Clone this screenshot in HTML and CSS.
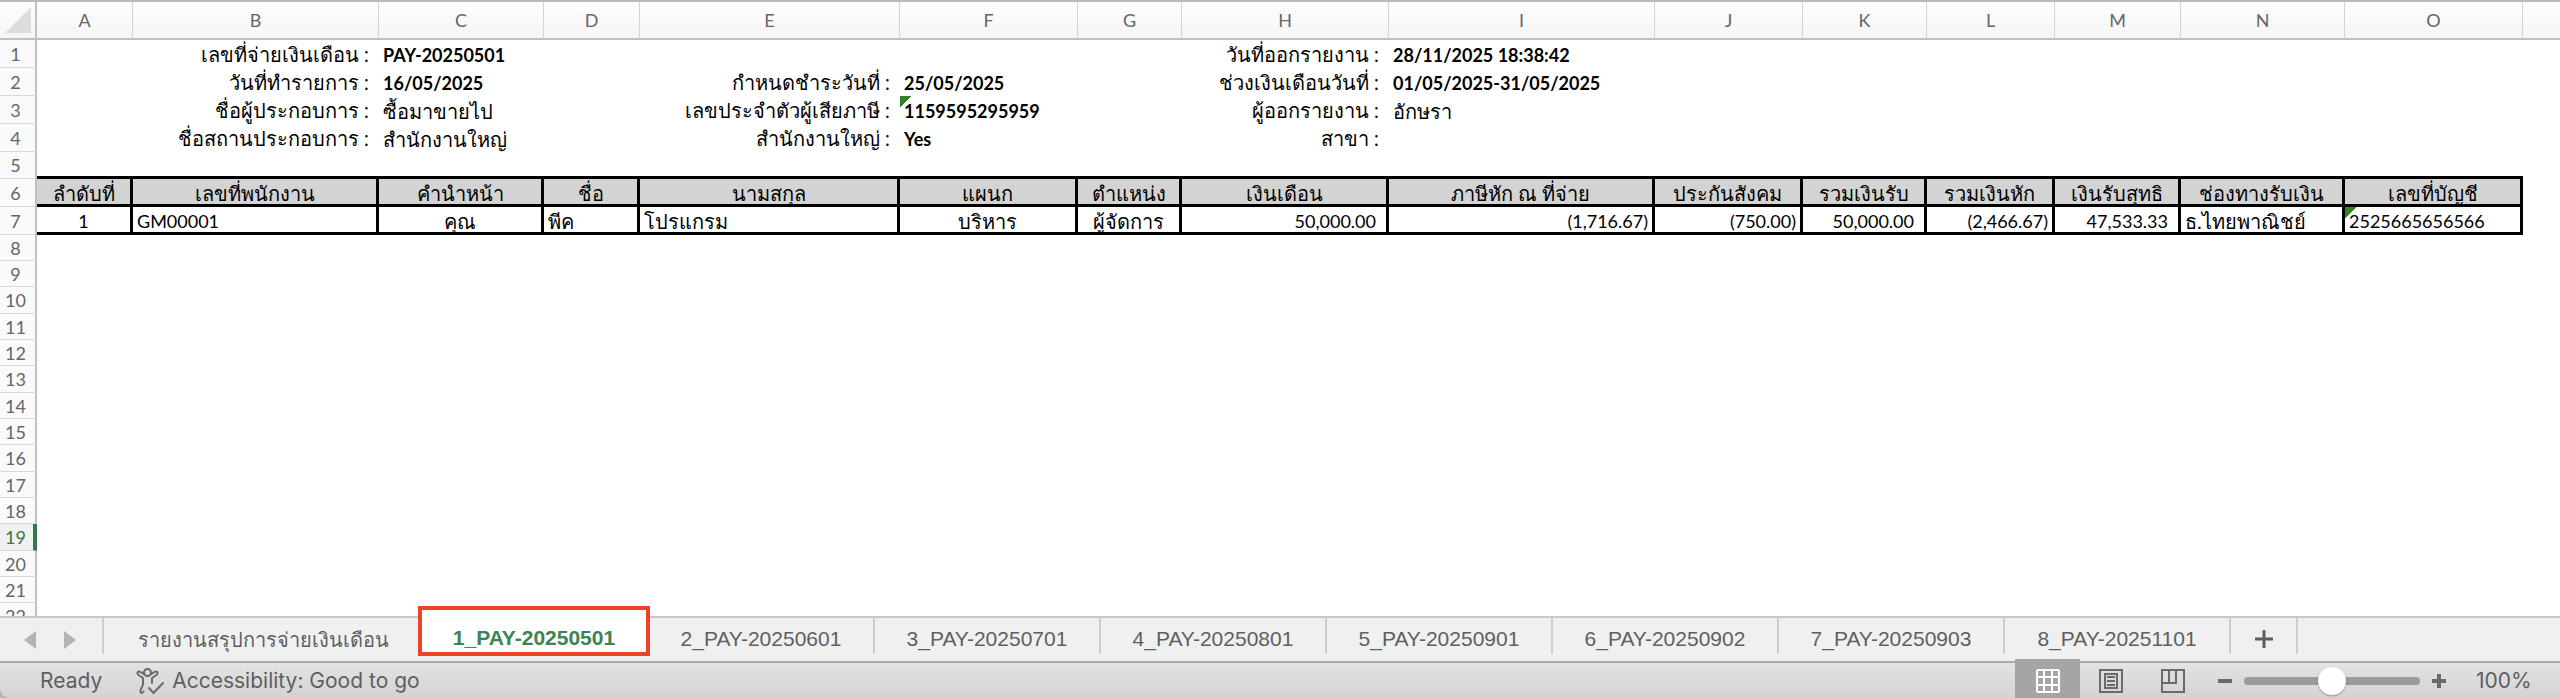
FILE: index.html
```html
<!DOCTYPE html>
<html lang="th">

<head>
    <meta charset="utf-8">
    <meta name="viewport" content="width=device-width, initial-scale=1.0">
    <title>1_PAY-20250501</title>
    <link rel="stylesheet" href="styles.css">
</head>

<body>
    <main class="sheet">
        <table class="grid">
            <colgroup>
                <col class="w-row">
                <col class="w-a">
                <col class="w-b">
                <col class="w-c">
                <col class="w-d">
                <col class="w-e">
                <col class="w-f">
                <col class="w-g">
                <col class="w-h">
                <col class="w-i">
                <col class="w-j">
                <col class="w-k">
                <col class="w-l">
                <col class="w-m">
                <col class="w-n">
                <col class="w-o">
                <col>
            </colgroup>
            <thead>
                <tr>
                    <td class="corner"><svg width="28" height="28" viewBox="0 0 28 28"><path d="M26 1v26H0z" fill="#dcdcdc"/></svg></td>
                    <th>A</th><th>B</th><th>C</th><th>D</th><th>E</th><th>F</th><th>G</th><th>H</th>
                    <th>I</th><th>J</th><th>K</th><th>L</th><th>M</th><th>N</th><th>O</th><th></th>
                </tr>
            </thead>
            <tbody class="report">
                <tr>
                    <th>1</th>
                    <td></td>
                    <td class="label">เลขที่จ่ายเงินเดือน :</td>
                    <td class="value">PAY-20250501</td>
                    <td></td><td></td><td></td><td></td>
                    <td class="label">วันที่ออกรายงาน :</td>
                    <td class="value">28/11/2025 18:38:42</td>
                    <td colspan="7"></td>
                </tr>
                <tr>
                    <th>2</th>
                    <td></td>
                    <td class="label">วันที่ทำรายการ :</td>
                    <td class="value">16/05/2025</td>
                    <td></td>
                    <td class="label">กำหนดชำระวันที่ :</td>
                    <td class="value">25/05/2025</td>
                    <td></td>
                    <td class="label">ช่วงเงินเดือนวันที่ :</td>
                    <td class="value">01/05/2025-31/05/2025</td>
                    <td colspan="7"></td>
                </tr>
                <tr>
                    <th>3</th>
                    <td></td>
                    <td class="label">ชื่อผู้ประกอบการ :</td>
                    <td class="thai">ซื้อมาขายไป</td>
                    <td></td>
                    <td class="label">เลขประจำตัวผู้เสียภาษี :</td>
                    <td class="value flagged">1159595295959</td>
                    <td></td>
                    <td class="label">ผู้ออกรายงาน :</td>
                    <td class="thai">อักษรา</td>
                    <td colspan="7"></td>
                </tr>
                <tr>
                    <th>4</th>
                    <td></td>
                    <td class="label">ชื่อสถานประกอบการ :</td>
                    <td class="thai">สำนักงานใหญ่</td>
                    <td></td>
                    <td class="label">สำนักงานใหญ่ :</td>
                    <td class="value">Yes</td>
                    <td></td>
                    <td class="label">สาขา :</td>
                    <td></td>
                    <td colspan="7"></td>
                </tr>
                <tr class="spacer">
                    <th>5</th>
                    <td colspan="15"></td>
                    <td class="outside"></td>
                </tr>
                <tr class="fields">
                    <th>6</th>
                    <td>ลำดับที่</td>
                    <td>เลขที่พนักงาน</td>
                    <td>คำนำหน้า</td>
                    <td>ชื่อ</td>
                    <td>นามสกุล</td>
                    <td>แผนก</td>
                    <td>ตำแหน่ง</td>
                    <td>เงินเดือน</td>
                    <td>ภาษีหัก ณ ที่จ่าย</td>
                    <td>ประกันสังคม</td>
                    <td>รวมเงินรับ</td>
                    <td>รวมเงินหัก</td>
                    <td>เงินรับสุทธิ</td>
                    <td>ช่องทางรับเงิน</td>
                    <td>เลขที่บัญชี</td>
                    <td class="outside"></td>
                </tr>
                <tr class="record">
                    <th>7</th>
                    <td class="center">1</td>
                    <td>GM00001</td>
                    <td class="center thai">คุณ</td>
                    <td class="thai">พีค</td>
                    <td class="thai">โปรแกรม</td>
                    <td class="center thai">บริหาร</td>
                    <td class="center thai">ผู้จัดการ</td>
                    <td class="amount">50,000.00</td>
                    <td class="amount negative">(1,716.67)</td>
                    <td class="amount negative">(750.00)</td>
                    <td class="amount">50,000.00</td>
                    <td class="amount negative">(2,466.67)</td>
                    <td class="amount">47,533.33</td>
                    <td class="thai">ธ.ไทยพาณิชย์</td>
                    <td class="flagged">2525665656566</td>
                    <td class="outside"></td>
                </tr>
            </tbody>
            <tbody class="blank">
                <tr><th>8</th><td colspan="16"></td></tr>
                <tr><th>9</th><td colspan="16"></td></tr>
                <tr><th>10</th><td colspan="16"></td></tr>
                <tr><th>11</th><td colspan="16"></td></tr>
                <tr><th>12</th><td colspan="16"></td></tr>
                <tr><th>13</th><td colspan="16"></td></tr>
                <tr><th>14</th><td colspan="16"></td></tr>
                <tr><th>15</th><td colspan="16"></td></tr>
                <tr><th>16</th><td colspan="16"></td></tr>
                <tr><th>17</th><td colspan="16"></td></tr>
                <tr><th>18</th><td colspan="16"></td></tr>
                <tr class="current"><th>19</th><td colspan="16"></td></tr>
                <tr><th>20</th><td colspan="16"></td></tr>
                <tr><th>21</th><td colspan="16"></td></tr>
                <tr><th>22</th><td colspan="16"></td></tr>
            </tbody>
        </table>
    </main>

    <nav class="tabs">
        <div class="tab-nav">
            <button type="button" aria-label="Previous sheet"><svg width="12" height="18" viewBox="0 0 12 18"><path d="M12 0v18L0 9z" fill="#b4b4b4"/></svg></button>
            <button type="button" aria-label="Next sheet"><svg width="12" height="18" viewBox="0 0 12 18"><path d="M0 0v18l12-9z" fill="#b4b4b4"/></svg></button>
        </div>
        <button type="button" class="tab summary">รายงานสรุปการจ่ายเงินเดือน</button>
        <button type="button" class="tab active">1_PAY-20250501</button>
        <button type="button" class="tab">2_PAY-20250601</button>
        <button type="button" class="tab">3_PAY-20250701</button>
        <button type="button" class="tab">4_PAY-20250801</button>
        <button type="button" class="tab">5_PAY-20250901</button>
        <button type="button" class="tab">6_PAY-20250902</button>
        <button type="button" class="tab">7_PAY-20250903</button>
        <button type="button" class="tab">8_PAY-20251101</button>
        <button type="button" class="tab add" aria-label="Add sheet"><svg width="18" height="18" viewBox="0 0 18 18"><path d="M9 0v18M0 9h18" stroke="#5f5f5f" stroke-width="3"/></svg></button>
    </nav>

    <footer class="status">
        <span class="ready">Ready</span>
        <button type="button" class="access">
            <svg width="28" height="26" viewBox="0 0 28 26" fill="none" stroke="#6a6a6a" stroke-width="2" stroke-linecap="round" stroke-linejoin="round">
                <circle cx="11.500" cy="4.500" r="3.500"/>
                <path d="M8 6C6 5 4 3 2.500 3.500S1 6 2.500 7L7 10v6c0 3-3 4-2.500 8 .5 1.500 2.500 1 3-.5M15 6c2-1 4-3 5.500-2.500S22 6 20.500 7L16 10v5"/>
                <path d="M13 20l4.500 5L27 15"/>
            </svg>
            <span>Accessibility: Good to go</span>
        </button>
        <div class="views">
            <button type="button" class="view on" aria-label="Normal view">
                <svg width="24" height="24" viewBox="0 0 24 24" fill="none" stroke="#fff" stroke-width="2"><rect x="1" y="1" width="22" height="22" rx="1"/><path d="M8 1v22M16 1v22M1 8h22M1 16h22"/></svg>
            </button>
            <button type="button" class="view" aria-label="Page layout">
                <svg width="24" height="24" viewBox="0 0 24 24" fill="none" stroke="#6a6a6a" stroke-width="2"><rect x="1" y="1" width="22" height="22"/><path d="M6 5h12v14H6zM8 8h8M8 12h8M8 16h8"/></svg>
            </button>
            <button type="button" class="view" aria-label="Page break preview">
                <svg width="24" height="24" viewBox="0 0 24 24" fill="none" stroke="#6a6a6a" stroke-width="2"><rect x="1" y="1" width="22" height="22"/><path d="M8 1v13M15 1v13H1"/></svg>
            </button>
        </div>
        <div class="zoom">
            <button type="button" aria-label="Zoom out"><svg width="14" height="14" viewBox="0 0 14 14"><path d="M0 7h14" stroke="#6a6a6a" stroke-width="4"/></svg></button>
            <input type="range" min="0" max="100" value="50" aria-label="Zoom">
            <button type="button" aria-label="Zoom in"><svg width="14" height="14" viewBox="0 0 14 14"><path d="M7 0v14M0 7h14" stroke="#6a6a6a" stroke-width="4"/></svg></button>
        </div>
        <span class="percent">100%</span>
    </footer>
</body>

</html>
```
FILE: styles.css
```css
* {
    box-sizing: border-box;
}

body {
    margin: 0;
    height: 100vh;
    display: flex;
    flex-direction: column;
    overflow: hidden;
    background: #b5b5b5;
    font-family: "Liberation Sans", Arial, sans-serif;
    font-size: 20px;
    color: #5f5f5f;
}

button {
    margin: 0;
    padding: 0;
    border: none;
    background: none;
    font: inherit;
    color: inherit;
}

svg {
    display: block;
}

/* sheet */

.sheet {
    flex: 1;
    min-height: 0;
    overflow: hidden;
    border-top: 2px solid #b9b9b9;
    background: #fff;
}

.grid {
    width: 100%;
    table-layout: fixed;
    border-collapse: separate;
    border-spacing: 0;
    font-family: Lato, "Noto Sans", sans-serif;
    font-size: 18px;
    line-height: 20px;
    color: #000;
}

.grid th,
.grid td {
    padding: 0;
    white-space: nowrap;
}

.grid th {
    font-weight: normal;
    color: #666;
}

.grid thead th,
.grid .corner {
    height: 38px;
    border-right: 1px solid #d4d4d4;
    border-bottom: 2px solid #c0c0c0;
    background: linear-gradient(#fdfdfd, #f6f6f6);
}

.grid thead th:last-child {
    border-right: none;
}

.grid .corner {
    border-right: 2px solid #c0c0c0;
    padding: 0 0 0 5px;
}

.grid tbody th {
    height: 28px;
    padding-right: 4px;
    border-right: 2px solid #c0c0c0;
    border-bottom: 1px solid #d8d8d8;
    background: #fafafa;
}

.grid tbody td {
    padding: 2px 4px 0;
}

.grid .thai,
.grid .label,
.grid .fields td {
    font-size: 20px;
}

.grid .label {
    padding-right: 10px;
    font-family: "Open Sans", "Noto Sans", sans-serif;
    text-align: right;
}

.grid .value {
    font-weight: bold;
}

.grid .spacer th {
    height: 27px;
}

.grid .spacer td,
.grid .fields td,
.grid .record td {
    border-bottom: 3px solid #000;
}

.grid .fields td,
.grid .record td {
    border-right: 3px solid #000;
}

.grid .fields td {
    background: #d3d3d3;
    text-align: center;
}

.grid .center {
    text-align: center;
}

.grid .amount {
    padding-right: 10px;
    text-align: right;
}

.grid .negative {
    padding-right: 4px;
}

.grid tr .outside {
    border: none;
    background: none;
}

/* green triangle: number stored as text */
.flagged {
    background: linear-gradient(135deg, #35802a 8px, transparent 8px) no-repeat;
}

.grid .blank th {
    height: 26px;
}

.grid .blank tr:nth-child(3n) th {
    height: 27px;
}

.grid .current th {
    padding-right: 2px;
    border-right: 4px solid #2f7a48;
    background: #f1f1f1;
    color: #2f7a48;
}

.w-row { width: 37px; }
.w-a { width: 96px; }
.w-b { width: 246px; }
.w-c { width: 165px; }
.w-d { width: 96px; }
.w-e { width: 260px; }
.w-f { width: 178px; }
.w-g { width: 104px; }
.w-h { width: 207px; }
.w-i { width: 266px; }
.w-j { width: 148px; }
.w-k { width: 124px; }
.w-l { width: 128px; }
.w-m { width: 126px; }
.w-n { width: 164px; }
.w-o { width: 178px; }

/* sheet tabs */

.tabs {
    display: flex;
    height: 47px;
    border-top: 2px solid #c8c8c8;
    border-bottom: 2px solid #a9aba9;
    background: #f0f0f0;
    font-size: 21px;
}

.tab-nav {
    display: flex;
    gap: 28px;
    width: 104px;
    height: 36px;
    padding: 8px 24px 0;
    border-right: 2px solid #cdcdcd;
}

.tab {
    min-width: 226px;
    height: 36px;
    padding-top: 6px;
    border-right: 2px solid #cdcdcd;
    text-align: center;
}

.tab.summary {
    width: 318px;
    border-right: none;
    font-size: 20px;
}

.tab.active {
    width: 232px;
    height: 50px;
    margin: -12px -1px 0 -4px;
    padding-top: 14px;
    border: 4px solid #ee4128;
    background: #fff;
    color: #3d8353;
    font-weight: bold;
    z-index: 1;
}

.tab.add {
    display: flex;
    justify-content: center;
    align-items: center;
    min-width: 67px;
}

/* status bar */

.status {
    display: flex;
    align-items: center;
    height: 35px;
    padding: 0 30px 0 40px;
    border-bottom-left-radius: 10px;
    background: linear-gradient(#e3e3e3, #d3d3d3);
    font-family: Inter, "Liberation Sans", sans-serif;
    font-size: 21px;
}

.access {
    display: flex;
    align-items: center;
    gap: 8px;
    margin-left: 34px;
}

.views {
    display: flex;
    align-self: flex-end;
    margin-left: auto;
}

.view {
    display: flex;
    justify-content: center;
    align-items: center;
    width: 62px;
    height: 39px;
    padding-top: 5px;
}

.view.on {
    width: 65px;
    background: #a5a5a5;
}

.zoom {
    display: flex;
    align-items: center;
    gap: 12px;
    margin: 0 30px 0 14px;
}

.zoom input {
    appearance: none;
    width: 176px;
    height: 8px;
    margin: 0;
    border-radius: 4px;
    background: #9b9b9b;
}

.zoom input::-webkit-slider-thumb {
    appearance: none;
    width: 28px;
    height: 28px;
    border-radius: 50%;
    background: #fff;
    box-shadow: 0 1px 2px rgba(0, 0, 0, 0.3);
}

.percent {
    width: 54px;
}
```
